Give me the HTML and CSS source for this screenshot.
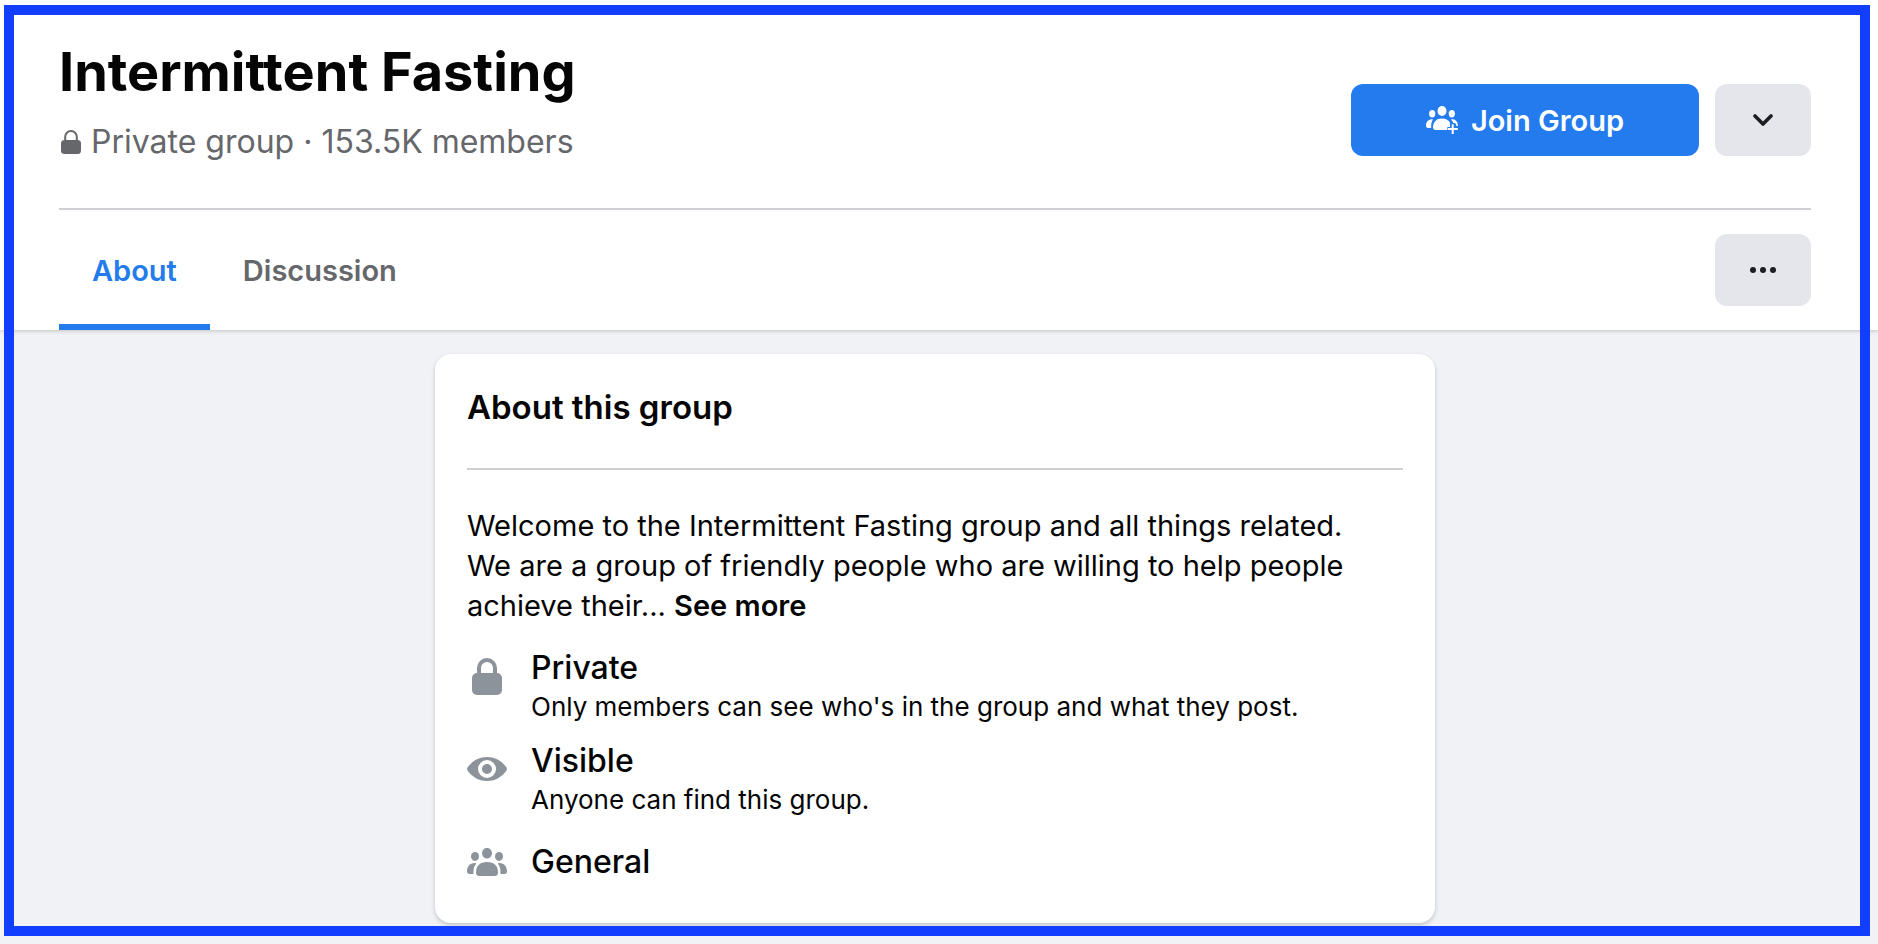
FILE: index.html
```html
<!DOCTYPE html>
<html lang="en">
<head>
  <meta charset="utf-8">
  <title>Intermittent Fasting</title>
  <link rel="stylesheet" href="styles.css">
</head>
<body>
  <header class="header">
    <div class="intro">
      <div class="identity">
        <h1 class="group-name">Intermittent Fasting</h1>
        <p class="meta">
          <svg class="meta-lock" viewBox="0 0 20 24" width="20" height="24" aria-hidden="true">
            <path d="M4.200 11V6.800a5.800 5.800 0 0 1 11.600 0V11" fill="none" stroke="currentColor" stroke-width="2"/>
            <rect x="0" y="10" width="20" height="14" rx="3.500" fill="currentColor"/>
          </svg>
          <span>Private group · 153.5K members</span>
        </p>
      </div>
      <div class="actions">
        <button class="button button-primary" type="button">
          <svg viewBox="0 0 32 28" width="32" height="28" fill="currentColor" aria-hidden="true">
            <ellipse cx="16" cy="5" rx="4.500" ry="5"/>
            <ellipse cx="6.200" cy="7.700" rx="3.100" ry="3.700"/>
            <ellipse cx="25.800" cy="7.700" rx="3.100" ry="3.700"/>
            <path d="M6.800 13.800C5.500 15.800 5 18.300 5.200 22H2.200C.800 22 0 21.200 0 19.800 0 16.200 2 13.500 5.400 13.200 6.600 13.100 7.200 13.200 6.800 13.800z"/>
            <path d="M25.200 13.800C26.300 15 27 16 27.400 17.200H31.600C30.900 14.900 29.200 13.300 26.600 13.200 25.400 13.100 24.800 13.200 25.200 13.800z"/>
            <path d="M16 12.400C10.500 12.400 7 15.800 7 21.300 7 23 7.900 24 9.600 24H24V16.400C22.200 13.800 19.500 12.400 16 12.400z"/>
            <path d="M26.700 17v11M21.400 23H32" stroke="#237bee" stroke-width="4"/>
            <path d="M26.700 18.300V28M22 23h9.800" stroke="currentColor" stroke-width="2"/>
            <path d="M29.600 16.400Q31.200 17.600 31.200 20" fill="none" stroke="currentColor" stroke-width="1.600"/>
          </svg>
          <span>Join Group</span>
        </button>
        <button class="button button-secondary" type="button" aria-label="Group options">
          <svg viewBox="0 0 20 12" width="20" height="12" aria-hidden="true">
            <path d="M2 2l8 8 8-8" fill="none" stroke="currentColor" stroke-width="3.600" stroke-linecap="round" stroke-linejoin="round"/>
          </svg>
        </button>
      </div>
    </div>
    <div class="toolbar">
      <nav class="tabs" aria-label="Group sections">
        <a class="tab tab-active" href="#about" aria-current="page">About</a>
        <a class="tab" href="#discussion">Discussion</a>
      </nav>
      <button class="button button-secondary" type="button" aria-label="More">
        <svg viewBox="0 0 26 6" width="26" height="6" fill="currentColor" aria-hidden="true">
          <circle cx="3" cy="3" r="3"/><circle cx="13" cy="3" r="3"/><circle cx="23" cy="3" r="3"/>
        </svg>
      </button>
    </div>
  </header>

  <main class="content">
    <section class="card" id="about">
      <h2 class="card-title">About this group</h2>
      <p class="description">Welcome to the Intermittent Fasting group and all things related. We are a group of friendly people who are willing to help people achieve their... <a class="see-more" href="#about">See more</a></p>
      <ul class="facts">
        <li class="fact">
          <span class="fact-icon">
            <svg viewBox="0 0 30 37" width="30" height="37" aria-hidden="true">
              <path d="M7 16V10a8 8 0 0 1 16 0v6" fill="none" stroke="currentColor" stroke-width="4"/>
              <rect x="0" y="15" width="30" height="22" rx="5" fill="currentColor"/>
            </svg>
          </span>
          <div>
            <h3 class="fact-title">Private</h3>
            <p class="fact-text">Only members can see who's in the group and what they post.</p>
          </div>
        </li>
        <li class="fact">
          <span class="fact-icon">
            <svg viewBox="0 0 40 24" width="40" height="24" aria-hidden="true">
              <path d="M20 0C11 0 4.500 5 .8 10Q-.6 12 .8 14C4.500 19 11 24 20 24S35.500 19 39.200 14Q40.600 12 39.200 10C35.500 5 29 0 20 0z" fill="currentColor"/>
              <circle cx="20" cy="12" r="7" fill="none" stroke="#fff" stroke-width="4"/>
            </svg>
          </span>
          <div>
            <h3 class="fact-title">Visible</h3>
            <p class="fact-text">Anyone can find this group.</p>
          </div>
        </li>
        <li class="fact fact-single">
          <span class="fact-icon">
            <svg viewBox="0 0 40 28" width="40" height="28" fill="currentColor" aria-hidden="true">
              <ellipse cx="20" cy="5.200" rx="5" ry="5.300"/>
              <ellipse cx="8" cy="8.400" rx="4" ry="4.500"/>
              <ellipse cx="32" cy="8.400" rx="4" ry="4.500"/>
              <path d="M20 14C13 14 9 18 9 24.500 9 27 10.200 28 12.500 28H27.500C29.800 28 31 27 31 24.500 31 18 27 14 20 14z"/>
              <path d="M7.500 15C3 15 0 18.500 0 23.500 0 25.200 1.200 26 2.800 26H6.500C6.300 21.500 7 18.300 8.800 16.200 9.400 15.400 8.800 15 7.500 15z"/>
              <path d="M32.500 15C37 15 40 18.500 40 23.500 40 25.200 38.800 26 37.200 26H33.500C33.700 21.500 33 18.300 31.200 16.200 30.600 15.400 31.200 15 32.500 15z"/>
            </svg>
          </span>
          <h3 class="fact-title">General</h3>
        </li>
      </ul>
    </section>
  </main>
  <div class="frame" aria-hidden="true"></div>
</body>
</html>
```

FILE: styles.css
```css
* {
  box-sizing: border-box;
}

body {
  margin: 0;
  min-height: 100vh;
  background: #f0f2f5;
  color: #050505;
  font-family: Inter, "Liberation Sans", sans-serif;
}

h1, h2, h3, p, ul {
  margin: 0;
  padding: 0;
}

svg {
  display: block;
  flex: none;
}

button {
  border: 0;
  font: inherit;
  cursor: pointer;
}

.header {
  padding: 0 67px 0 59px;
  background: #fff;
  box-shadow: 0 1px 4px rgba(0, 0, 0, 0.2);
}

.intro {
  display: flex;
  align-items: flex-end;
  justify-content: space-between;
  padding: 40px 0 46px;
  border-bottom: 2px solid #ced0d4;
}

.group-name {
  font-size: 54px;
  line-height: 64px;
  font-weight: 700;
}

.meta {
  display: flex;
  align-items: center;
  gap: 10px;
  margin-top: 18px;
  padding-left: 2px;
  color: #65676b;
  font-size: 32px;
  line-height: 40px;
}

.actions {
  display: flex;
  gap: 16px;
  margin-bottom: 6px;
}

.button {
  display: flex;
  align-items: center;
  justify-content: center;
  height: 72px;
  border-radius: 12px;
}

.button-primary {
  gap: 13px;
  width: 348px;
  background: #237bee;
  color: #fff;
  font-size: 29px;
  font-weight: 600;
}

.button-secondary {
  width: 96px;
  background: #e4e6eb;
  color: #1c1e21;
}

.toolbar {
  display: flex;
  align-items: center;
  justify-content: space-between;
}

.tabs {
  display: flex;
}

.tab {
  padding: 43px 33px 35px;
  border-bottom: 6px solid transparent;
  color: #65676b;
  font-size: 29px;
  line-height: 36px;
  font-weight: 600;
  text-decoration: none;
}

.tab-active {
  border-bottom-color: #237bee;
  color: #237bee;
}

.content {
  padding: 24px 67px 0 59px;
}

.card {
  max-width: 1000px;
  margin: 0 auto;
  padding: 33px 32px;
  border-radius: 16px;
  background: #fff;
  box-shadow: 0 2px 4px rgba(0, 0, 0, 0.2);
}

.card-title {
  padding-bottom: 41px;
  border-bottom: 2px solid #ced0d4;
  font-size: 33px;
  line-height: 40px;
  font-weight: 600;
}

.description {
  margin-top: 36px;
  padding-right: 32px;
  font-size: 29px;
  line-height: 40px;
}

.see-more {
  color: inherit;
  font-weight: 600;
  text-decoration: none;
}

.facts {
  display: flex;
  flex-direction: column;
  gap: 15px;
  margin-top: 22px;
  list-style: none;
}

.fact {
  display: flex;
  gap: 24px;
}

.fact-single {
  align-items: center;
}

.fact-icon {
  display: flex;
  align-items: center;
  justify-content: center;
  width: 40px;
  height: 56px;
  color: #8c939a;
}

.fact-title {
  font-size: 32px;
  line-height: 40px;
  font-weight: 500;
}

.fact-text {
  font-size: 26px;
  line-height: 38px;
}

.frame {
  position: fixed;
  inset: 5px 8px 8px 4px;
  border: 10px solid #123fff;
  pointer-events: none;
}
```
